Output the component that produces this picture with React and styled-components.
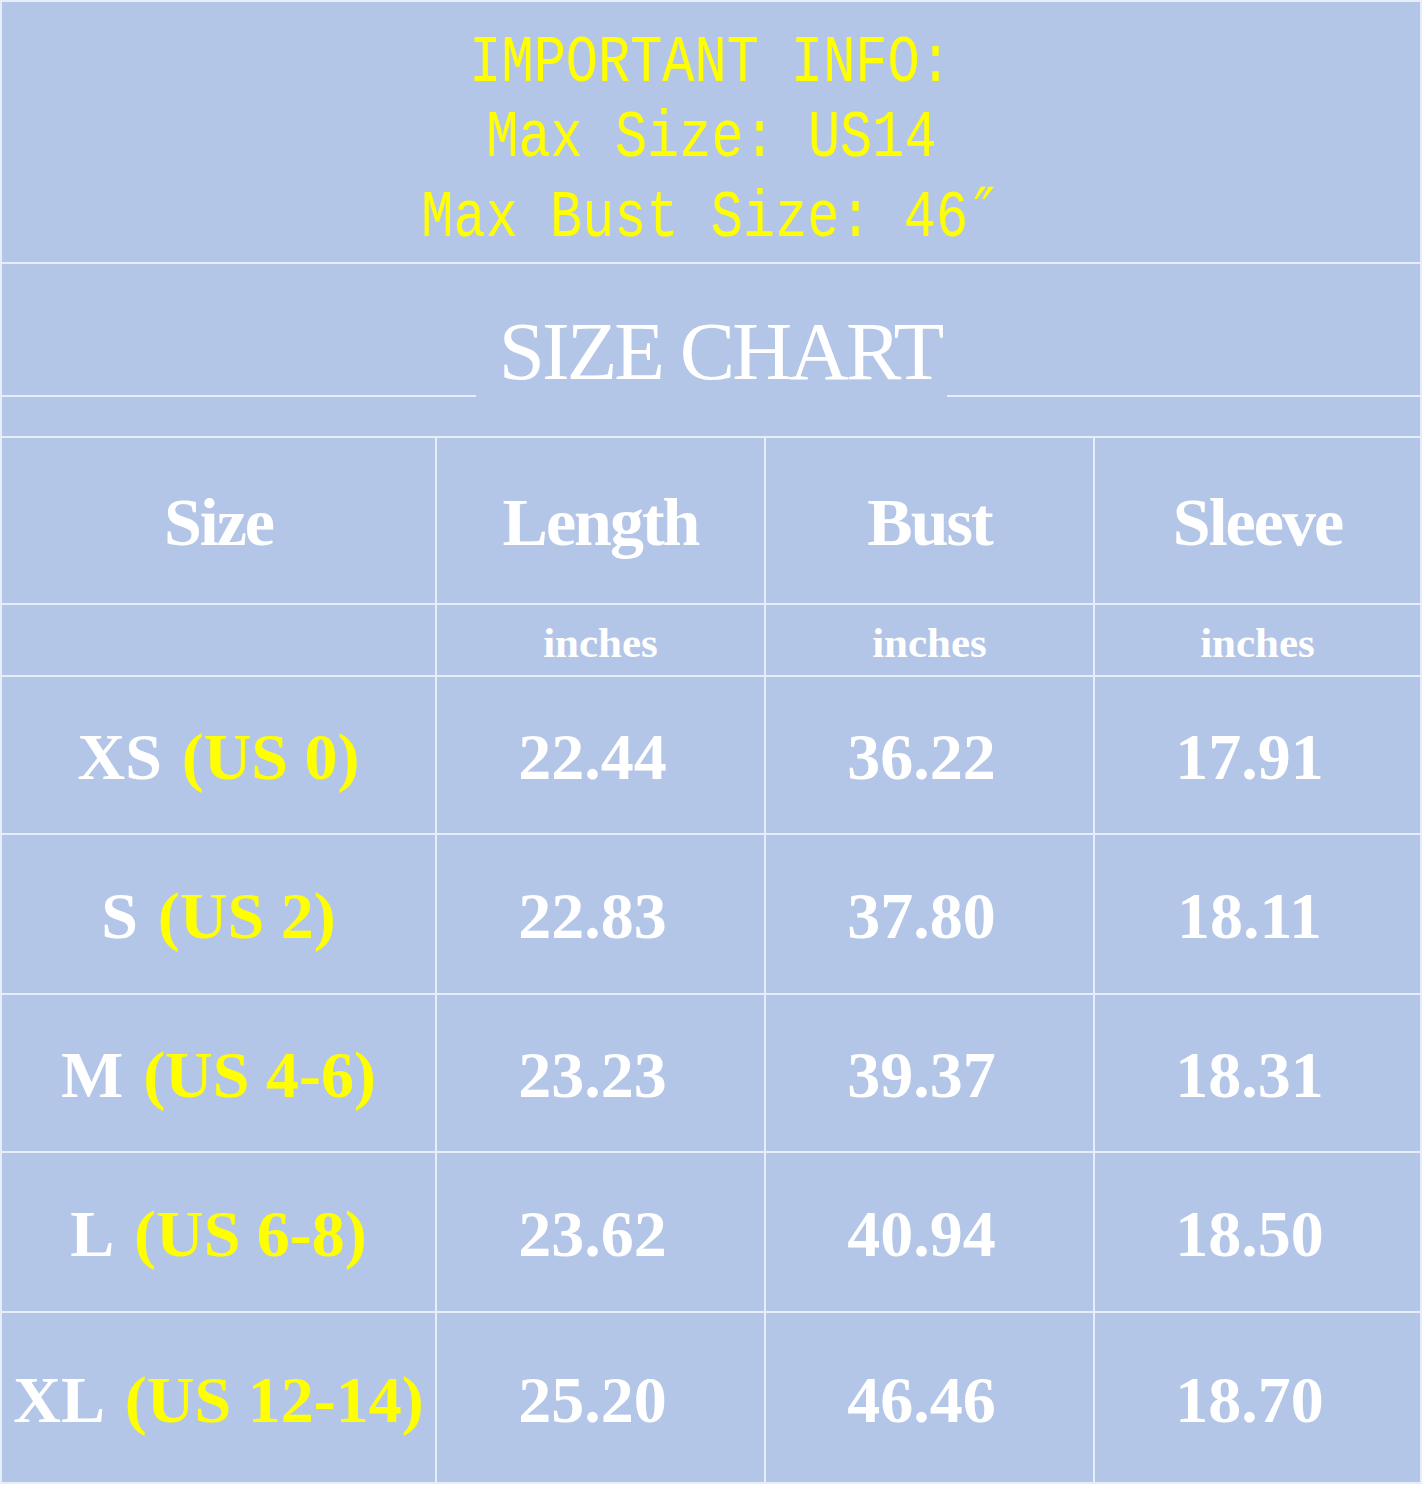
import React from "react";
import styled, { createGlobalStyle } from "styled-components";

const LINE = "#e6eef9";
const BLUE = "#b4c6e7";
const YELLOW = "#ffff00";

const GlobalStyle = createGlobalStyle`
  html, body {
    margin: 0;
    padding: 0;
    background: #ffffff;
  }
`;

const rows = [
  { size: "XS", us: "(US 0)", length: "22.44", bust: "36.22", sleeve: "17.91", h: 156 },
  { size: "S", us: "(US 2)", length: "22.83", bust: "37.80", sleeve: "18.11", h: 158 },
  { size: "M", us: "(US 4-6)", length: "23.23", bust: "39.37", sleeve: "18.31", h: 156 },
  { size: "L", us: "(US 6-8)", length: "23.62", bust: "40.94", sleeve: "18.50", h: 158 },
  { size: "XL", us: "(US 12-14)", length: "25.20", bust: "46.46", sleeve: "18.70", h: 169 },
];

export default function App() {
  return (
    <>
      <GlobalStyle />
      <Chart>
        <InfoBand>
          <MonoLine>IMPORTANT INFO:</MonoLine>
          <MonoLine>Max Size: US14</MonoLine>
          <MonoLine>
            Max Bust Size: 46<Prime>″</Prime>
          </MonoLine>
        </InfoBand>

        <TitleBand>
          <Rule />
          <Title>SIZE CHART</Title>
          <Rule />
        </TitleBand>

        <HeadCell>Size</HeadCell>
        <HeadCell>Length</HeadCell>
        <HeadCell>Bust</HeadCell>
        <HeadCell>Sleeve</HeadCell>

        <UnitCell />
        <UnitCell>inches</UnitCell>
        <UnitCell>inches</UnitCell>
        <UnitCell>inches</UnitCell>

        {rows.map((r) => (
          <React.Fragment key={r.size}>
            <SizeCell $h={r.h}>
              {r.size}
              <Us>{r.us}</Us>
            </SizeCell>
            <ValueCell $h={r.h}>{r.length}</ValueCell>
            <ValueCell $h={r.h}>{r.bust}</ValueCell>
            <ValueCell $h={r.h}>{r.sleeve}</ValueCell>
          </React.Fragment>
        ))}
      </Chart>
    </>
  );
}

const Chart = styled.div`
  display: grid;
  grid-template-columns: 433px 327px 327px 325px;
  gap: 2px;
  padding: 2px;
  width: 1422px;
  box-sizing: border-box;
  background: ${LINE};
`;

const InfoBand = styled.div`
  grid-column: 1 / -1;
  height: 260px;
  box-sizing: border-box;
  padding-top: 24px;
  background: ${BLUE};
  display: flex;
  flex-direction: column;
  align-items: center;
`;

const MonoLine = styled.div`
  font-family: "Liberation Mono", "Courier New", monospace;
  font-size: 67px;
  line-height: 75px;
  color: ${YELLOW};
  white-space: pre;
  transform: scaleX(0.8);
`;

const Prime = styled.span`
  display: inline-block;
  width: 0.6em;
  font-family: "DejaVu Serif", "Liberation Serif", serif;
  font-style: italic;
  text-align: center;
`;

const TitleBand = styled.div`
  grid-column: 1 / -1;
  height: 172px;
  box-sizing: border-box;
  padding-bottom: 39px;
  background: ${BLUE};
  display: flex;
  align-items: flex-end;
`;

const Rule = styled.div`
  flex: 1;
  height: 2px;
  background: ${LINE};
`;

const Title = styled.div`
  width: 471px;
  box-sizing: border-box;
  padding: 0 0 4px 18px;
  text-align: center;
  font-family: "Liberation Serif", "Times New Roman", serif;
  font-size: 83px;
  line-height: 1;
  letter-spacing: -3px;
  color: #ffffff;
  white-space: nowrap;
`;

const Cell = styled.div`
  background: ${BLUE};
  display: flex;
  align-items: center;
  justify-content: center;
  box-sizing: border-box;
  font-family: "Liberation Serif", "Times New Roman", serif;
  font-weight: 700;
  color: #ffffff;
  white-space: nowrap;
`;

const HeadCell = styled(Cell)`
  height: 165px;
  padding-top: 4px;
  font-size: 68px;
  letter-spacing: -2px;
`;

const UnitCell = styled(Cell)`
  height: 70px;
  padding-top: 4px;
  font-size: 43px;
`;

const SizeCell = styled(Cell)`
  height: ${(p) => p.$h}px;
  padding-top: 4px;
  font-size: 66px;
`;

const Us = styled.span`
  color: ${YELLOW};
  margin-left: 0.3em;
`;

const ValueCell = styled(Cell)`
  height: ${(p) => p.$h}px;
  padding: 4px 16px 0 0;
  font-size: 66px;
`;
